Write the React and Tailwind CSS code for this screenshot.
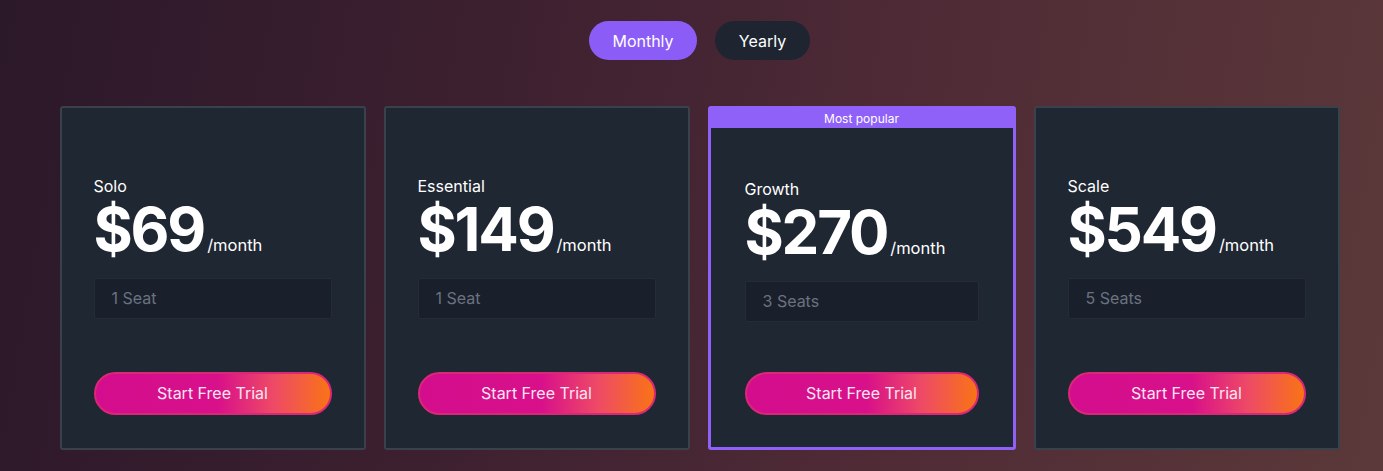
import { useState } from 'react';

const plans = [
  { name: 'Solo', price: '$69', seats: '1 Seat' },
  { name: 'Essential', price: '$149', seats: '1 Seat' },
  { name: 'Growth', price: '$270', seats: '3 Seats', popular: true },
  { name: 'Scale', price: '$549', seats: '5 Seats' },
];

function PlanBody({ plan }) {
  return (
    <div className="flex flex-col">
      <div className="text-[16px] leading-5 text-white">{plan.name}</div>
      <div className="mt-[5px] flex items-baseline">
        <span className="text-[60px] font-bold leading-[56px] tracking-[-2.2px] text-white">{plan.price}</span>
        <span className="ml-[3px] text-[16.5px] text-white">/month</span>
      </div>
      <div className="mt-[20px] flex h-[41px] items-center rounded-[2px] border border-[#252c38] bg-[#19202b] pl-[17px] text-[16px] text-[#6b7280]">
        {plan.seats}
      </div>
      <button
        className={`${plan.popular ? 'mt-[50px]' : 'mt-[53px]'} h-[43px] rounded-full border-2 border-[#db2777] bg-[linear-gradient(90deg,#d30d8d_0%,#d8108a_52%,#ee4a66_76%,#f97316_100%)] text-[16px] text-[#fde4f2]`}
      >
        Start Free Trial
      </button>
    </div>
  );
}

export default function App() {
  const [yearly, setYearly] = useState(false);

  return (
    <div
      className="flex h-[471px] w-full flex-col items-center bg-[linear-gradient(100deg,#2b1829_0%,#3d2030_35%,#4f2b36_65%,#5b3839_100%)] pl-[16px]"
      style={{ fontFamily: 'Inter, "Noto Sans", sans-serif' }}
    >
      <div className="mt-[21px] flex gap-[18px]">
        <button
          onClick={() => setYearly(false)}
          className={`h-[39px] w-[108px] rounded-full text-[16px] text-white ${!yearly ? 'bg-[#8b5cf6]' : 'bg-[#1e2530]'}`}
        >
          Monthly
        </button>
        <button
          onClick={() => setYearly(true)}
          className={`h-[39px] w-[95px] rounded-full text-[16px] text-white ${yearly ? 'bg-[#8b5cf6]' : 'bg-[#1e2530]'}`}
        >
          Yearly
        </button>
      </div>

      <div className="mt-[46px] flex items-start gap-[18px]">
        {plans.map((plan) =>
          plan.popular ? (
            <div key={plan.name} className="flex h-[344px] w-[308px] flex-col rounded-[3px] bg-[#9061f9] px-[3px] pb-[3px]">
              <div className="flex h-[22px] items-center justify-center pt-[3px] text-[12px] text-white">Most popular</div>
              <div className="flex-1 bg-[#1f2733] px-[34px] pt-[51px]">
                <PlanBody plan={plan} />
              </div>
            </div>
          ) : (
            <div
              key={plan.name}
              className="h-[344px] w-[306px] rounded-[3px] border-2 border-[#3a414b] bg-[#1f2733] px-[32px] pt-[68px]"
            >
              <PlanBody plan={plan} />
            </div>
          )
        )}
      </div>
    </div>
  );
}
